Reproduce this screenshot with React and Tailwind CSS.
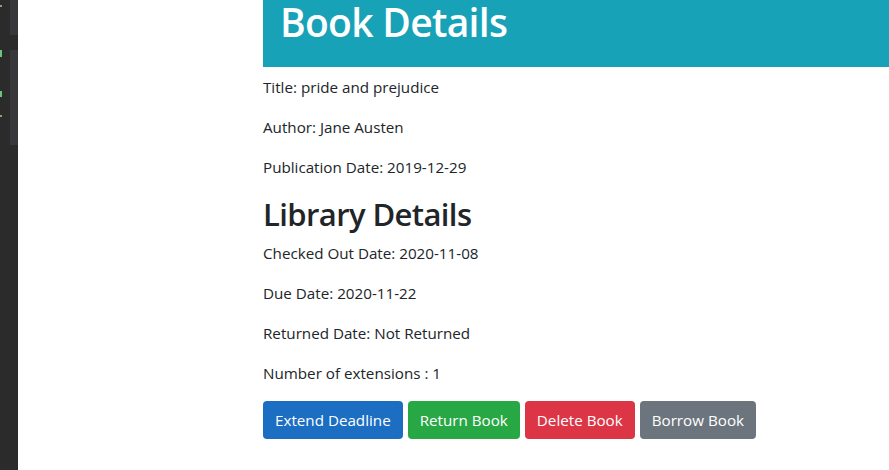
const lines1 = ["Title: pride and prejudice", "Author: Jane Austen", "Publication Date: 2019-12-29"];
const lines2 = ["Checked Out Date: 2020-11-08", "Due Date: 2020-11-22", "Returned Date: Not Returned", "Number of extensions : 1"];
const buttons = [
  { label: "Extend Deadline", cls: "bg-[#1b6ec2]" },
  { label: "Return Book", cls: "bg-[#28a745]" },
  { label: "Delete Book", cls: "bg-[#dc3545]" },
  { label: "Borrow Book", cls: "bg-[#6c757d]" },
];

export default function App() {
  const font = { fontFamily: '"Open Sans", "Noto Sans", sans-serif' };
  return (
    <div className="flex h-[470px] w-[889px] overflow-hidden bg-white" style={font}>
      <div className="flex w-[18px] shrink-0 bg-[#2b2b2c]">
        <div className="flex w-[2px] flex-col">
          <div className="mt-[5px] h-[2px] bg-[#a09a6a]" />
          <div className="mt-[43px] h-[7px] bg-[#6fc27a]" />
          <div className="mt-[34px] h-[6px] bg-[#6fc27a]" />
          <div className="mt-[18px] h-[2px] bg-[#a09a6a]" />
        </div>
        <div className="ml-[8px] flex w-[8px] flex-col">
          <div className="h-[35px] bg-[#38383b]" />
          <div className="mt-[15px] h-[95px] bg-[#38383b]" />
        </div>
      </div>
      <div className="flex-1 pl-[245px] text-[#212529]">
        <div className="mb-[8px] h-[67px] bg-[#17a2b8] pl-[17px] pt-[2px]">
          <h1 className="text-[39px] font-semibold leading-[40px] tracking-[-0.7px] text-white">Book Details</h1>
        </div>
        <div className="flex flex-col gap-[16px] text-[15.2px] leading-[24px]">
          {lines1.map((t) => (
            <p key={t}>{t}</p>
          ))}
        </div>
        <h2 className="mb-[8px] mt-[16px] text-[31px] font-semibold leading-[38px] tracking-[-0.6px]">Library Details</h2>
        <div className="flex flex-col gap-[16px] text-[15.2px] leading-[24px]">
          {lines2.map((t) => (
            <p key={t}>{t}</p>
          ))}
        </div>
        <div className="mt-[16px] flex gap-[5px]">
          {buttons.map((b) => (
            <button key={b.label} className={`h-[38px] rounded-[4px] px-[12px] text-[15.2px] text-white ${b.cls}`}>
              {b.label}
            </button>
          ))}
        </div>
      </div>
    </div>
  );
}
